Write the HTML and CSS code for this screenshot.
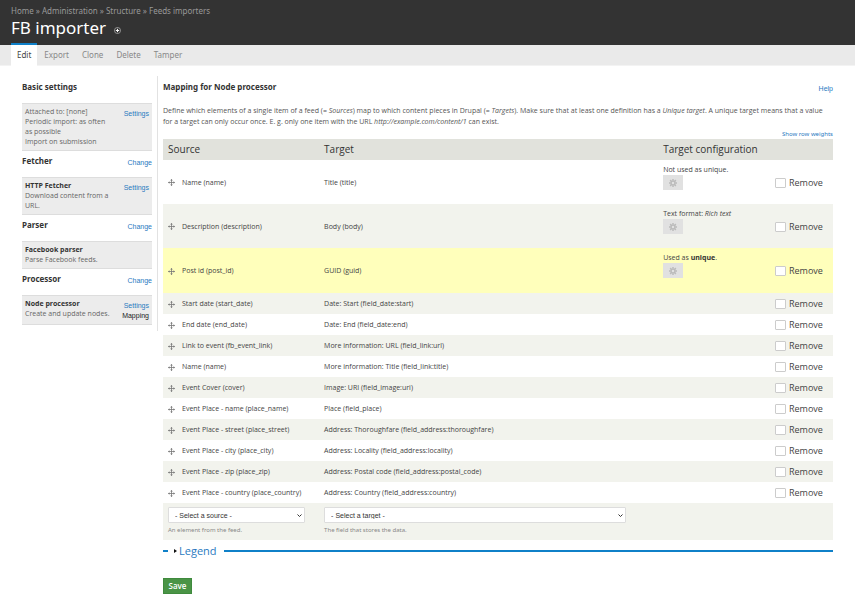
FILE: index.html
```html
<!DOCTYPE html>
<html lang="en">
<head>
    <meta charset="UTF-8">
    <meta name="viewport" content="width=device-width, initial-scale=1.0">
    <title>FB importer</title>
    <link rel="stylesheet" href="styles.css">
</head>
<body>
    <svg class="sprite" aria-hidden="true">
        <symbol id="move" viewBox="0 0 14 14">
            <path d="M7 1v12M1 7h12" fill="none" stroke="#777" stroke-width="1.6"/>
            <path d="M7 0l2.6 3H4.400zM7 14l2.600-3H4.400zM0 7l3-2.600v5.200zM14 7l-3-2.600v5.200z" fill="#777"/>
        </symbol>
        <symbol id="gear" viewBox="0 0 16 16">
            <circle cx="8" cy="8" r="4" fill="none" stroke="#bbb" stroke-width="3"/>
            <path d="M8 0v3M8 13v3M0 8h3M13 8h3M2.300 2.300l2.200 2.200M11.500 11.500l2.200 2.200M13.700 2.300l-2.200 2.200M4.500 11.500l-2.200 2.200" stroke="#bbb" stroke-width="3"/>
        </symbol>
    </svg>

    <header class="branding">
        <nav class="breadcrumb">
            <a href="#">Home</a> » <a href="#">Administration</a> » <a href="#">Structure</a> » <a href="#">Feeds importers</a>
        </nav>
        <div class="title-row">
            <h1>FB importer</h1>
            <a href="#" class="add-shortcut" aria-label="Add to shortcuts">
                <svg viewBox="0 0 14 14"><circle cx="7" cy="7" r="6" fill="#222" stroke="#bbb" stroke-width="1.500"/><path d="M7 3.500v7M3.500 7h7" stroke="#fff" stroke-width="2.400"/></svg>
            </a>
        </div>
    </header>

    <nav class="tabs">
        <a href="#" class="active">Edit</a>
        <a href="#">Export</a>
        <a href="#">Clone</a>
        <a href="#">Delete</a>
        <a href="#">Tamper</a>
    </nav>

    <div class="page">
        <aside class="sidebar">
            <div class="section-head"><h2>Basic settings</h2></div>
            <div class="section-box">
                <p>Attached to: [none]<br>Periodic import: as often as possible<br>Import on submission</p>
                <div class="actions"><a href="#">Settings</a></div>
            </div>

            <div class="section-head"><h2>Fetcher</h2><a href="#">Change</a></div>
            <div class="section-box">
                <p><strong>HTTP Fetcher</strong><br>Download content from a URL.</p>
                <div class="actions"><a href="#">Settings</a></div>
            </div>

            <div class="section-head"><h2>Parser</h2><a href="#">Change</a></div>
            <div class="section-box">
                <p><strong>Facebook parser</strong><br>Parse Facebook feeds.</p>
            </div>

            <div class="section-head"><h2>Processor</h2><a href="#">Change</a></div>
            <div class="section-box">
                <p><strong>Node processor</strong><br>Create and update nodes.</p>
                <div class="actions"><a href="#">Settings</a><a href="#" class="current">Mapping</a></div>
            </div>
        </aside>

        <main class="content">
            <div class="content-head">
                <h2>Mapping for Node processor</h2>
                <a href="#">Help</a>
            </div>
            <p class="intro">Define which elements of a single item of a feed (= <em>Sources</em>) map to which content pieces in Drupal (= <em>Targets</em>). Make sure that at least one definition has a <em>Unique target</em>. A unique target means that a value for a target can only occur once. E. g. only one item with the URL <em>http://example.com/content/1</em> can exist.</p>

            <form>
                <div class="weights"><a href="#">Show row weights</a></div>
                <table class="mapping">
                    <thead>
                        <tr>
                            <th class="col-source">Source</th>
                            <th class="col-target">Target</th>
                            <th class="col-config">Target configuration</th>
                            <th class="col-remove"></th>
                        </tr>
                    </thead>
                    <tbody>
                        <tr class="tall">
                            <td><svg class="handle"><use href="#move"/></svg>Name (name)</td>
                            <td>Title (title)</td>
                            <td class="config">Not used as unique.<button type="button" aria-label="Configure"><svg><use href="#gear"/></svg></button></td>
                            <td><label><input type="checkbox">Remove</label></td>
                        </tr>
                        <tr class="tall">
                            <td><svg class="handle"><use href="#move"/></svg>Description (description)</td>
                            <td>Body (body)</td>
                            <td class="config">Text format: <em>Rich text</em><button type="button" aria-label="Configure"><svg><use href="#gear"/></svg></button></td>
                            <td><label><input type="checkbox">Remove</label></td>
                        </tr>
                        <tr class="tall unique">
                            <td><svg class="handle"><use href="#move"/></svg>Post id (post_id)</td>
                            <td>GUID (guid)</td>
                            <td class="config">Used as <strong>unique</strong>.<button type="button" aria-label="Configure"><svg><use href="#gear"/></svg></button></td>
                            <td><label><input type="checkbox">Remove</label></td>
                        </tr>
                        <tr>
                            <td><svg class="handle"><use href="#move"/></svg>Start date (start_date)</td>
                            <td>Date: Start (field_date:start)</td>
                            <td></td>
                            <td><label><input type="checkbox">Remove</label></td>
                        </tr>
                        <tr>
                            <td><svg class="handle"><use href="#move"/></svg>End date (end_date)</td>
                            <td>Date: End (field_date:end)</td>
                            <td></td>
                            <td><label><input type="checkbox">Remove</label></td>
                        </tr>
                        <tr>
                            <td><svg class="handle"><use href="#move"/></svg>Link to event (fb_event_link)</td>
                            <td>More information: URL (field_link:url)</td>
                            <td></td>
                            <td><label><input type="checkbox">Remove</label></td>
                        </tr>
                        <tr>
                            <td><svg class="handle"><use href="#move"/></svg>Name (name)</td>
                            <td>More information: Title (field_link:title)</td>
                            <td></td>
                            <td><label><input type="checkbox">Remove</label></td>
                        </tr>
                        <tr>
                            <td><svg class="handle"><use href="#move"/></svg>Event Cover (cover)</td>
                            <td>Image: URI (field_image:uri)</td>
                            <td></td>
                            <td><label><input type="checkbox">Remove</label></td>
                        </tr>
                        <tr>
                            <td><svg class="handle"><use href="#move"/></svg>Event Place - name (place_name)</td>
                            <td>Place (field_place)</td>
                            <td></td>
                            <td><label><input type="checkbox">Remove</label></td>
                        </tr>
                        <tr>
                            <td><svg class="handle"><use href="#move"/></svg>Event Place - street (place_street)</td>
                            <td>Address: Thoroughfare (field_address:thoroughfare)</td>
                            <td></td>
                            <td><label><input type="checkbox">Remove</label></td>
                        </tr>
                        <tr>
                            <td><svg class="handle"><use href="#move"/></svg>Event Place - city (place_city)</td>
                            <td>Address: Locality (field_address:locality)</td>
                            <td></td>
                            <td><label><input type="checkbox">Remove</label></td>
                        </tr>
                        <tr>
                            <td><svg class="handle"><use href="#move"/></svg>Event Place - zip (place_zip)</td>
                            <td>Address: Postal code (field_address:postal_code)</td>
                            <td></td>
                            <td><label><input type="checkbox">Remove</label></td>
                        </tr>
                        <tr>
                            <td><svg class="handle"><use href="#move"/></svg>Event Place - country (place_country)</td>
                            <td>Address: Country (field_address:country)</td>
                            <td></td>
                            <td><label><input type="checkbox">Remove</label></td>
                        </tr>
                        <tr class="add-row">
                            <td>
                                <div class="select"><select aria-label="Source"><option>- Select a source -</option></select><svg viewBox="0 0 10 6"><path d="M1 1l4 4 4-4" fill="none" stroke="#333" stroke-width="2"/></svg></div>
                                <div class="description">An element from the feed.</div>
                            </td>
                            <td>
                                <div class="select target"><select aria-label="Target"><option>- Select a target -</option></select><svg viewBox="0 0 10 6"><path d="M1 1l4 4 4-4" fill="none" stroke="#333" stroke-width="2"/></svg></div>
                                <div class="description">The field that stores the data.</div>
                            </td>
                            <td></td>
                            <td></td>
                        </tr>
                    </tbody>
                </table>

                <div class="legend"><a href="#">Legend</a></div>
                <button type="submit" class="save">Save</button>
            </form>
        </main>
    </div>
</body>
</html>
```
FILE: styles.css
```css
* {
    box-sizing: border-box;
}
body {
    margin: 0;
    font-family: "Open Sans", "Noto Sans", sans-serif;
    font-size: 7px;
    line-height: 10px;
    color: #444;
    background-color: #fff;
}
a {
    color: #2a7abf;
    text-decoration: none;
}
h1, h2, p {
    margin: 0;
}
.sprite {
    display: none;
}
.branding,
.tabs,
h2,
.weights,
.description {
    font-family: "Noto Sans", "Open Sans", sans-serif;
}
.branding {
    height: 45px;
    padding: 5px 11px 0;
    background-color: #333;
    color: #999;
}
.breadcrumb {
    font-size: 8px;
    line-height: 11px;
}
.breadcrumb a {
    color: #999;
}
.title-row {
    display: flex;
    align-items: center;
    gap: 8px;
}
h1 {
    font-size: 17px;
    line-height: 24px;
    font-weight: normal;
    color: #fff;
}
.add-shortcut {
    height: 7px;
    margin-top: 4px;
}
.add-shortcut svg {
    display: block;
    width: 7px;
    height: 7px;
}
.tabs {
    display: flex;
    align-items: flex-end;
    gap: 1px;
    height: 21px;
    padding-left: 11px;
    background-color: #eaeaea;
    border-bottom: 1px solid #f3f3f3;
    font-size: 8px;
}
.tabs a {
    padding: 0 6px;
    line-height: 20px;
    color: #888;
}
.tabs .active {
    background-color: #fff;
    border-top: 2px solid #0f80c8;
    color: #444;
    margin-bottom: -1px;
    padding-bottom: 1px;
}
.page {
    display: flex;
    padding: 10px 22px 0;
}
.sidebar {
    flex: 0 0 136px;
    align-self: flex-start;
    padding: 5px 5px 2px 0;
    border-right: 1px solid #e2e2e2;
}
h2 {
    font-size: 8px;
    line-height: 12px;
    font-weight: bold;
    color: #333;
}
.section-head {
    display: flex;
    justify-content: space-between;
    align-items: flex-start;
    height: 22px;
}
.section-head a {
    font: 7px/16px "Liberation Sans", Arial, sans-serif;
}
.section-box {
    display: flex;
    justify-content: space-between;
    padding: 3px;
    margin-bottom: 4px;
    background-color: #ececec;
    border-top: 1px solid #ddd;
    border-bottom: 1px solid #ddd;
    color: #666;
}
.section-box p {
    max-width: 88px;
}
strong {
    color: #333;
}
.actions {
    font: 7px/10px "Liberation Sans", Arial, sans-serif;
    text-align: right;
    padding-top: 2px;
}
.actions a {
    display: block;
}
.actions .current {
    color: #222;
}
.content {
    flex: 1;
    padding: 5px 0 0 5px;
}
.content-head {
    display: flex;
    justify-content: space-between;
    height: 24px;
}
.content-head a {
    font: 7px/15px "Liberation Sans", Arial, sans-serif;
}
.intro {
    line-height: 11px;
    color: #555;
}
.weights {
    padding-top: 2px;
    font-size: 6px;
    text-align: right;
}
.mapping {
    width: 100%;
    table-layout: fixed;
    border-collapse: collapse;
}
.mapping th {
    height: 21px;
    padding: 0 5px 1px;
    background-color: #e1e2dc;
    font-size: 10px;
    font-weight: normal;
    text-align: left;
    color: #333;
}
.col-source {
    width: 23.3%;
}
.col-target {
    width: 50.6%;
}
.col-config {
    width: 16.7%;
}
.mapping td {
    height: 21px;
    padding: 1px 5px 0;
}
.mapping tbody tr:nth-child(even) {
    background-color: #f2f3ed;
}
.mapping tr.unique {
    background-color: #ffffbb;
}
.mapping .tall td {
    height: 44px;
}
.mapping .unique td {
    height: 45px;
}
.mapping .config {
    padding-top: 5px;
    vertical-align: top;
}
.handle {
    width: 7px;
    height: 7px;
    margin-right: 7px;
    vertical-align: middle;
}
.config button {
    display: block;
    width: 20px;
    height: 15px;
    padding: 0;
    border: none;
    background-color: #e1e1e1;
}
.config button svg {
    display: block;
    width: 8px;
    height: 8px;
    margin: 0 auto;
}
.mapping label {
    display: flex;
    align-items: center;
    gap: 3px;
    font-size: 9px;
}
.mapping input {
    appearance: none;
    width: 11px;
    height: 10px;
    margin: 0;
    border: 1px solid #ccc;
    border-radius: 1px;
    background-color: #fff;
}
.mapping .add-row td {
    height: 37px;
    padding-top: 4px;
    vertical-align: top;
}
.select {
    display: grid;
    align-items: center;
    max-width: 137px;
}
.select.target {
    max-width: 302px;
}
.select select {
    grid-area: 1 / 1;
    appearance: none;
    width: 100%;
    height: 16px;
    padding: 0 6px;
    border: 1px solid #ddd;
    border-radius: 1px;
    background-color: #fff;
    font: 7px "Liberation Sans", Arial, sans-serif;
    color: #333;
}
.select svg {
    grid-area: 1 / 1;
    justify-self: end;
    width: 5px;
    height: 3px;
    margin-right: 3px;
    pointer-events: none;
}
.description {
    margin-top: 2px;
    color: #888;
    font-size: 6px;
}
.legend {
    display: flex;
    align-items: center;
    margin-top: 3px;
    font-size: 11px;
    line-height: 16px;
}
.legend::before,
.legend::after {
    content: "";
    width: 5px;
    height: 2px;
    background-color: #0f80c8;
}
.legend::after {
    flex: 1;
    margin-left: 7px;
}
.legend a::before {
    content: "";
    display: inline-block;
    margin: 0 2px 2px 6px;
    border: 2px solid transparent;
    border-left: 3px solid #111;
    border-right: none;
}
.save {
    display: block;
    margin-top: 19px;
    width: 29px;
    height: 16px;
    padding: 0 0 1px;
    border: 1px solid #3f8a3d;
    background-color: #4a9446;
    color: #fff;
    font-family: inherit;
    font-size: 8px;
    font-weight: 600;
}
```
